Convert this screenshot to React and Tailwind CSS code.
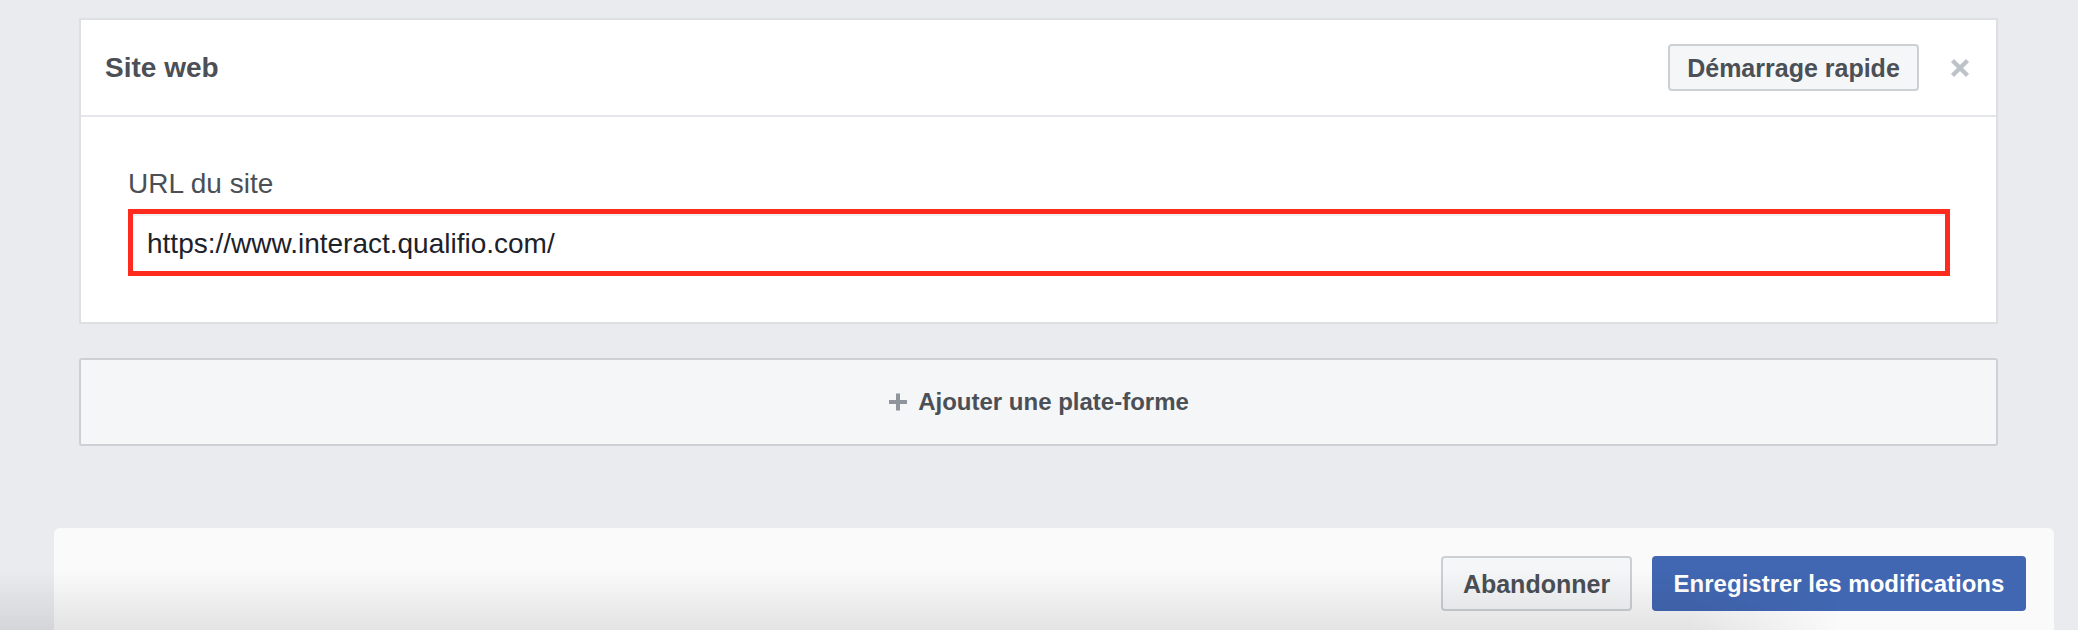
export default function App() {
  return (
    <div className="relative h-[630px] w-[2078px] overflow-hidden bg-[#e9ebee] font-['Liberation_Sans',Arial,sans-serif]">
      <div className="pl-[79px] pr-[80px] pt-[18px]">
        <div className="border-2 border-[#dddfe2] bg-white">
          <div className="flex h-[97px] items-center border-b-2 border-[#e5e6e9] pl-[24px] pr-[26px]">
            <div className="flex-1 text-[28px] font-bold leading-[34px] text-[#4b4f56]">Site web</div>
            <button className="flex h-[47px] w-[251px] items-center justify-center rounded-[4px] border-2 border-[#ccd0d5] bg-[#f5f6f7] text-[25px] font-bold leading-[30px] text-[#4b4f56]">
              Démarrage rapide
            </button>
            <svg className="ml-[31px]" width="20" height="20" viewBox="0 0 20 20" fill="none">
              <path d="M2.5 2.5L17.5 17.5M17.5 2.5L2.5 17.5" stroke="#bec3c9" strokeWidth="4.4" />
            </svg>
          </div>
          <div className="pl-[47px] pr-[46px] pt-[50px] pb-[46px]">
            <div className="text-[28px] leading-[34px] text-[#4b4f56]">URL du site</div>
            <div className="mt-2 h-[67px] border-[5px] border-[#ff2b1f] bg-white">
              <div className="flex h-full items-center border-t-2 border-[#eef0f2] pl-[14px] text-[28px] leading-[34px] text-[#1d2129]">
                https://www.interact.qualifio.com/
              </div>
            </div>
          </div>
        </div>
        <div className="mt-[34px] flex h-[88px] items-center justify-center gap-[10px] rounded-[3px] border-2 border-[#ccd0d5] bg-[#f5f6f7]">
          <svg width="20" height="20" viewBox="0 0 20 20" fill="none">
            <path d="M10 1.5V18.5M1 10H19" stroke="#90949c" strokeWidth="4" />
          </svg>
          <span className="text-[24px] font-bold leading-[30px] text-[#4b4f56]">Ajouter une plate-forme</span>
        </div>
      </div>
      <div className="ml-[54px] mt-[82px] flex h-[120px] w-[2000px] justify-end gap-[20px] rounded-t-[6px] bg-[#fafafa] pr-[28px] pt-[28px]">
        <button className="flex h-[55px] w-[191px] items-center justify-center rounded-[4px] border-2 border-[#ccd0d5] bg-[#f5f6f7] text-[25px] font-bold leading-[30px] text-[#4b4f56]">
          Abandonner
        </button>
        <button className="flex h-[55px] w-[374px] items-center justify-center rounded-[4px] bg-[#4267b2] text-[24px] font-bold leading-[30px] text-white">
          Enregistrer les modifications
        </button>
      </div>
      <div className="pointer-events-none absolute bottom-0 left-0 h-[60px] w-full bg-[linear-gradient(to_bottom,rgba(0,0,0,0),rgba(0,0,0,0.09))] [mask-image:linear-gradient(to_right,black_0,black_1690px,transparent_1840px)]" />
    </div>
  );
}
